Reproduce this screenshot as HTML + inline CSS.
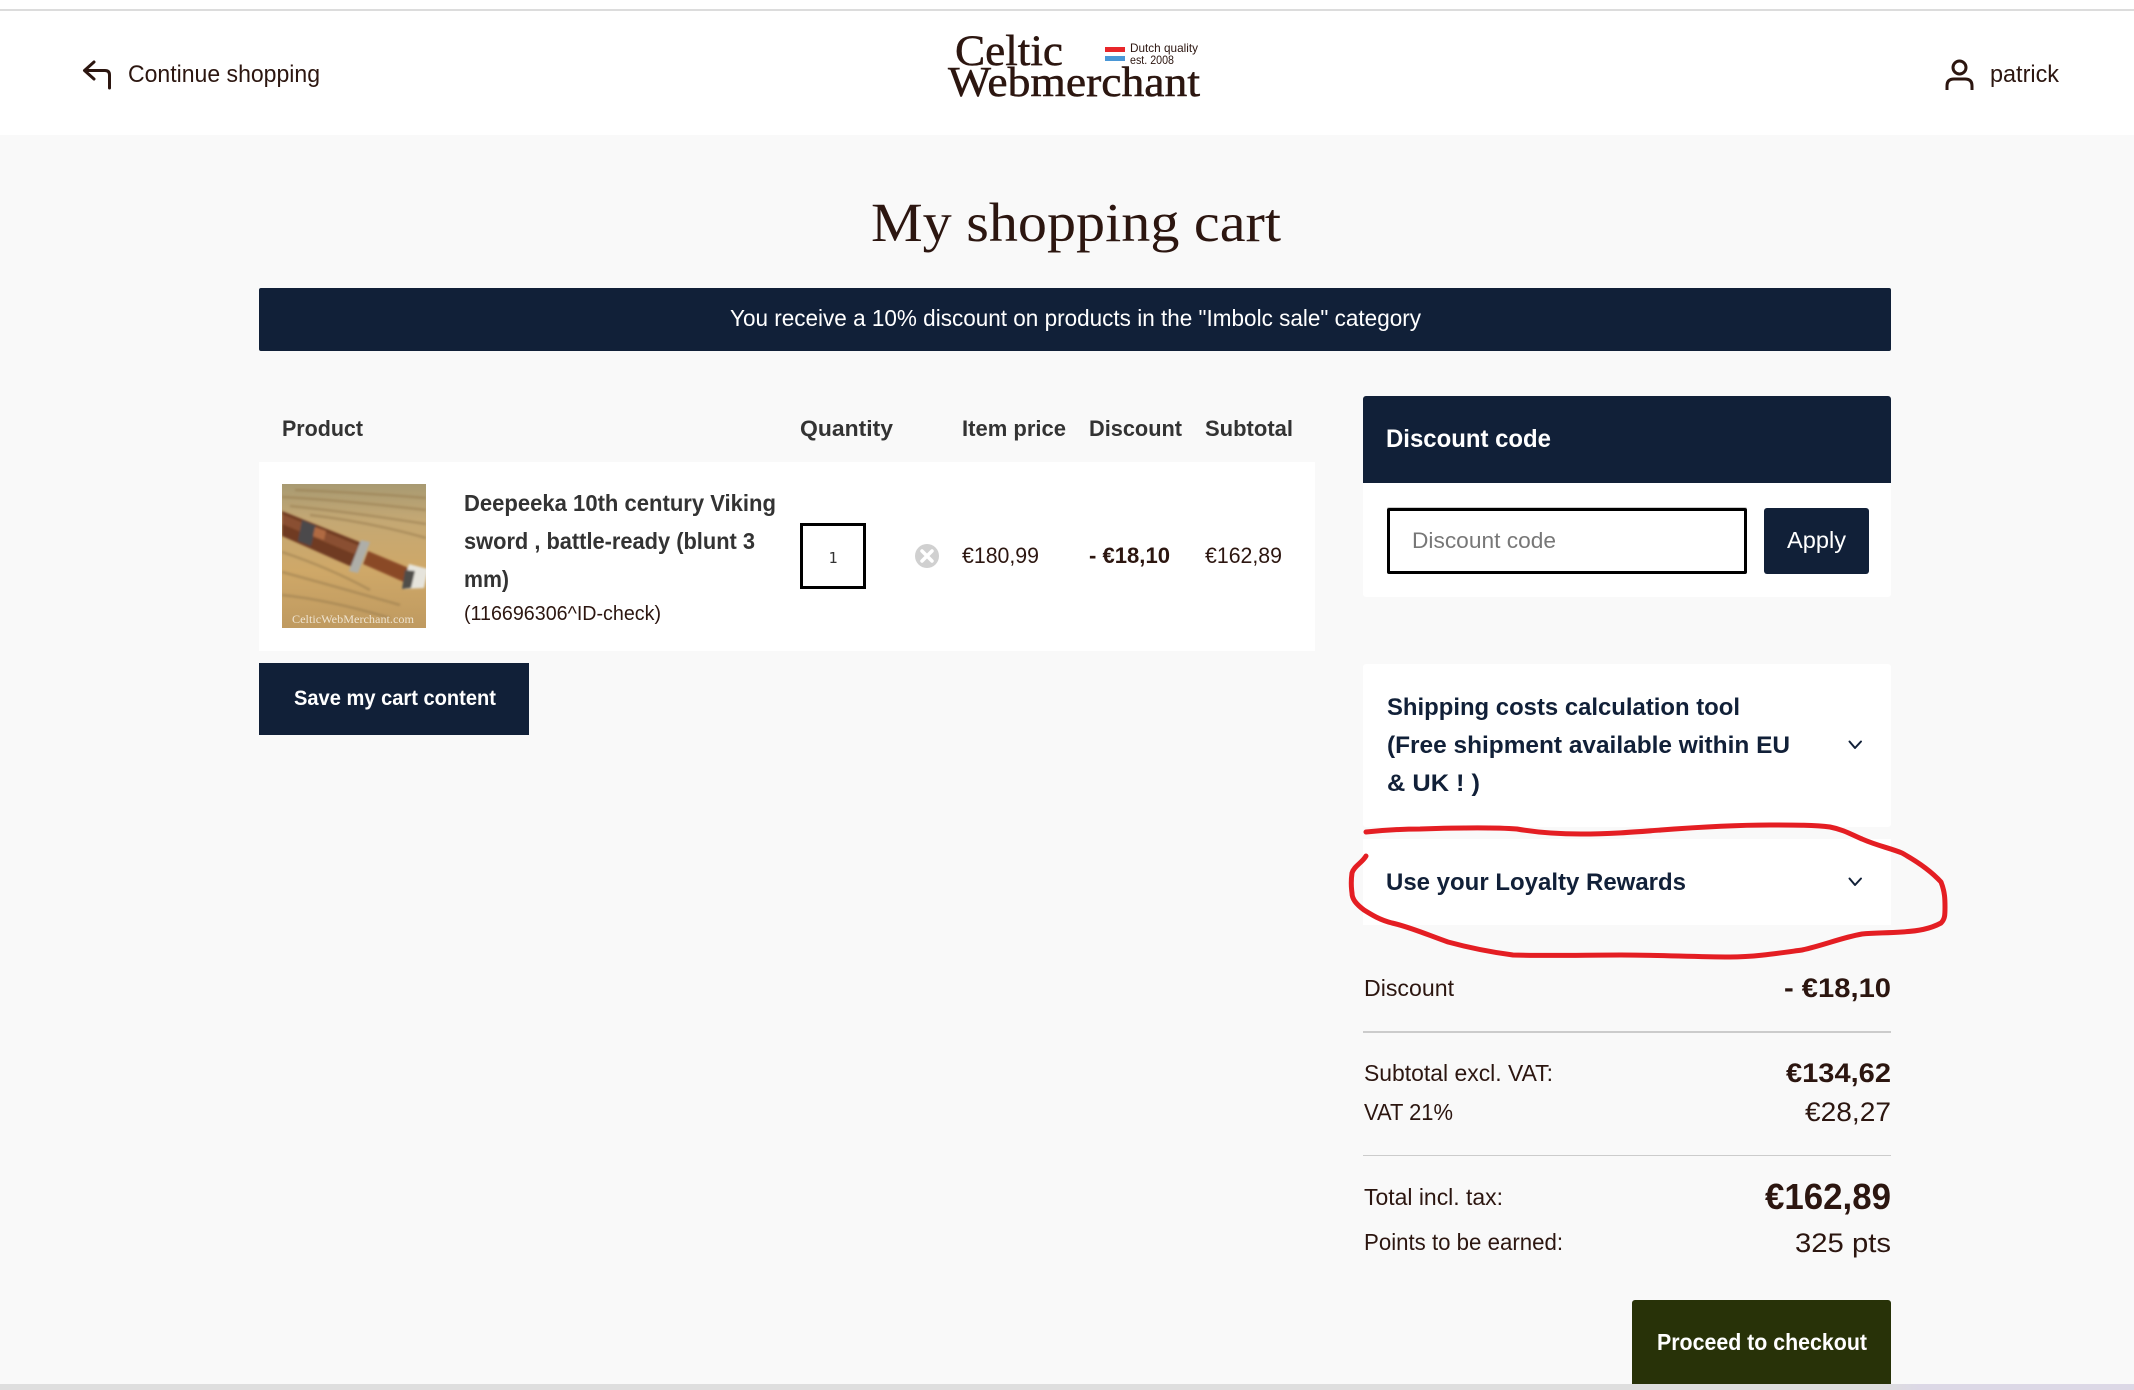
<!DOCTYPE html>
<html lang="en">
<head>
<meta charset="utf-8">
<title>My shopping cart</title>
<style>
html,body{margin:0;padding:0;width:2134px;height:1390px;overflow:hidden;background:#f9f9f9}
.b{position:absolute;box-sizing:border-box}
svg{position:absolute;left:0;top:0}
text{font-family:"Liberation Sans",sans-serif;fill:#2c1610}
.bd{font-weight:700}
.nv{fill:#112038}
.gr{fill:#333}
.w{fill:#fff}
.sf{font-family:"Liberation Serif",serif}
</style>
</head>
<body>
<div class="b" style="left:0;top:0;width:2134px;height:135px;background:#fff"></div>
<div class="b" style="left:0;top:9px;width:2134px;height:2px;background:#dcdcdc"></div>
<div class="b" style="left:259px;top:288px;width:1632px;height:63px;background:#112038;border-radius:2px"></div>
<div class="b" style="left:259px;top:462px;width:1056px;height:189px;background:#fff"></div>
<div class="b" style="left:800px;top:523px;width:66px;height:66px;border:3px solid #000;background:#fff"></div>
<div class="b" style="left:259px;top:663px;width:270px;height:72px;background:#112038"></div>
<div class="b" style="left:1363px;top:396px;width:528px;height:201px;background:#fff;border-radius:3px"></div>
<div class="b" style="left:1363px;top:396px;width:528px;height:87px;background:#112038;border-radius:3px 3px 0 0"></div>
<div class="b" style="left:1387px;top:508px;width:360px;height:66px;border:3px solid #000;border-radius:2px;background:#fff;box-shadow:0 -1px 0 #ccc"></div>
<div class="b" style="left:1764px;top:508px;width:105px;height:66px;background:#112038;border-radius:3px"></div>
<div class="b" style="left:1363px;top:664px;width:528px;height:163px;background:#fff;border-radius:3px"></div>
<div class="b" style="left:1363px;top:839px;width:528px;height:86px;background:#fff"></div>
<div class="b" style="left:1363px;top:1031px;width:528px;height:2px;background:#ccc"></div>
<div class="b" style="left:1363px;top:1155px;width:528px;height:1px;background:#ccc"></div>
<div class="b" style="left:1632px;top:1300px;width:259px;height:84px;background:#283208;border-radius:3px 3px 0 0"></div>
<div class="b" style="left:0;top:1384px;width:2134px;height:6px;background:linear-gradient(90deg,#dedede 0,#dedede 88%,#dcd8e6 90%,#dcd8e6 100%)"></div>

<svg width="2134" height="1390" viewBox="0 0 2134 1390" xmlns="http://www.w3.org/2000/svg">
<defs>
<linearGradient id="wood" x1="0" y1="0" x2="0" y2="1">
<stop offset="0" stop-color="#a89a72"/>
<stop offset=".25" stop-color="#c4a874"/>
<stop offset=".6" stop-color="#cfa868"/>
<stop offset="1" stop-color="#bf9a60"/>
</linearGradient>
<filter id="bl" x="-5%" y="-5%" width="110%" height="110%"><feGaussianBlur stdDeviation="1.100"/></filter>
<clipPath id="pc"><rect x="282" y="484" width="144" height="144"/></clipPath>
</defs>

<!-- header -->
<g fill="none" stroke="#2c1610" stroke-width="3" stroke-linecap="round" stroke-linejoin="round">
<path d="M94 62L84.500 70.500L94 79"/>
<path d="M85 70.500H105Q109.500 70.500 109.500 75V88"/>
</g>
<text x="128" y="82" font-size="24" textLength="192" lengthAdjust="spacingAndGlyphs">Continue shopping</text>

<text class="sf" x="955" y="65" font-size="43" stroke="#2c1610" stroke-width=".5" textLength="108" lengthAdjust="spacingAndGlyphs">Celtic</text>
<text class="sf" x="948" y="96" font-size="42" stroke="#2c1610" stroke-width=".5" textLength="252" lengthAdjust="spacingAndGlyphs">Webmerchant</text>
<rect x="1105" y="47" width="20" height="5" fill="#e8262a"/>
<rect x="1105" y="56" width="20" height="5" fill="#4a97d6"/>
<text x="1130" y="52" font-size="12" textLength="68" lengthAdjust="spacingAndGlyphs">Dutch quality</text>
<text x="1130" y="64" font-size="12" textLength="44" lengthAdjust="spacingAndGlyphs">est. 2008</text>

<g fill="none" stroke="#2c1610" stroke-width="3" stroke-linecap="butt">
<circle cx="1959.500" cy="67.500" r="6.500"/>
<path d="M1947 90V86Q1947 79 1954 79H1965Q1972 79 1972 86V90"/>
</g>
<text x="1990" y="82" font-size="24" textLength="69" lengthAdjust="spacingAndGlyphs">patrick</text>

<!-- title / banner -->
<text class="sf" x="871" y="241" font-size="55" textLength="410" lengthAdjust="spacingAndGlyphs">My shopping cart</text>
<text class="w" x="730" y="326" font-size="23" textLength="691" lengthAdjust="spacingAndGlyphs">You receive a 10% discount on products in the "Imbolc sale" category</text>

<!-- table head -->
<g font-size="22">
<text class="bd gr" x="282" y="436" textLength="81" lengthAdjust="spacingAndGlyphs">Product</text>
<text class="bd gr" x="800" y="436" textLength="93" lengthAdjust="spacingAndGlyphs">Quantity</text>
<text class="bd gr" x="962" y="436" textLength="104" lengthAdjust="spacingAndGlyphs">Item price</text>
<text class="bd gr" x="1089" y="436" textLength="93" lengthAdjust="spacingAndGlyphs">Discount</text>
<text class="bd gr" x="1205" y="436" textLength="88" lengthAdjust="spacingAndGlyphs">Subtotal</text>
</g>

<!-- product image -->
<g clip-path="url(#pc)">
<rect x="282" y="484" width="144" height="144" fill="url(#wood)"/>
<g filter="url(#bl)">
<g stroke="#94784a" stroke-width="2.500" opacity=".5" fill="none">
<path d="M282 497Q340 500 426 510"/>
<path d="M290 506Q350 512 426 524"/>
<path d="M310 515Q370 522 426 538"/>
<path d="M295 490Q350 492 426 498"/>
<path d="M282 552Q330 568 370 590"/>
<path d="M282 572Q330 585 400 605"/>
<path d="M282 595Q330 600 390 618"/>
</g>
<path d="M282 511L362 543L352 567L282 536Z" fill="#6f3a20"/>
<path d="M282 514L360 546L354 554L282 524Z" fill="#8a5030"/>
<path d="M302 520L316 526L311 546L298 541Z" fill="#4c4a4c"/>
<path d="M315 527L326 531L324 540L313 536Z" fill="#b06a42"/>
<path d="M368 551L411 569L404 582L363 564Z" fill="#8a4826"/>
<path d="M361 540L370 542L358 573L349 571Z" fill="#aeaea8"/>
<path d="M409 564L428 569L424 588L402 589Z" fill="#e6e4dc"/>
<path d="M405 570L402 589L411 588L415 571Z" fill="#4f4d48"/>
</g>
<text x="292" y="623" font-size="12" class="sf" style="fill:#eee3cf" textLength="122" lengthAdjust="spacingAndGlyphs">CelticWebMerchant.com</text>
</g>

<!-- product -->
<g font-size="23">
<text class="bd gr" x="464" y="511" textLength="312" lengthAdjust="spacingAndGlyphs">Deepeeka 10th century Viking</text>
<text class="bd gr" x="464" y="549" textLength="291" lengthAdjust="spacingAndGlyphs">sword , battle-ready (blunt 3</text>
<text class="bd gr" x="464" y="587" textLength="45" lengthAdjust="spacingAndGlyphs">mm)</text>
</g>
<text x="464" y="620" font-size="20" textLength="197" lengthAdjust="spacingAndGlyphs">(116696306^ID-check)</text>
<text x="833" y="563" font-size="15" text-anchor="middle" style="font-family:'DejaVu Sans Mono',monospace;fill:#333">1</text>
<circle cx="927" cy="556" r="12" fill="#d0d0d0"/>
<path d="M922 551L932 561M932 551L922 561" stroke="#fff" stroke-width="3.500" stroke-linecap="round"/>
<text x="962" y="563" font-size="22" textLength="77" lengthAdjust="spacingAndGlyphs">€180,99</text>
<text class="bd" x="1089" y="563" font-size="22" textLength="81" lengthAdjust="spacingAndGlyphs">- €18,10</text>
<text x="1205" y="563" font-size="22" textLength="77" lengthAdjust="spacingAndGlyphs">€162,89</text>

<text class="bd w" x="294" y="705" font-size="21" textLength="202" lengthAdjust="spacingAndGlyphs">Save my cart content</text>

<!-- discount card -->
<text class="bd w" x="1386" y="447" font-size="25" textLength="165" lengthAdjust="spacingAndGlyphs">Discount code</text>
<text x="1412" y="548" font-size="22" style="fill:#777" textLength="144" lengthAdjust="spacingAndGlyphs">Discount code</text>
<text class="w" x="1787" y="548" font-size="23" textLength="59" lengthAdjust="spacingAndGlyphs">Apply</text>

<!-- accordions -->
<g font-size="24">
<text class="bd nv" x="1387" y="715" textLength="353" lengthAdjust="spacingAndGlyphs">Shipping costs calculation tool</text>
<text class="bd nv" x="1387" y="753" textLength="403" lengthAdjust="spacingAndGlyphs">(Free shipment available within EU</text>
<text class="bd nv" x="1387" y="791" textLength="93" lengthAdjust="spacingAndGlyphs">&amp; UK ! )</text>
<text class="bd nv" x="1386" y="890" textLength="300" lengthAdjust="spacingAndGlyphs">Use your Loyalty Rewards</text>
</g>
<g fill="none" stroke="#112038" stroke-width="2" stroke-linecap="round" stroke-linejoin="round">
<path d="M1849.500 741.500L1855 748L1861 741.500"/>
<path d="M1849.500 878.500L1855 885L1861 878.500"/>
</g>

<!-- totals -->
<text x="1364" y="996" font-size="23" textLength="90" lengthAdjust="spacingAndGlyphs">Discount</text>
<text class="bd" x="1891" y="997" font-size="27" text-anchor="end" textLength="107" lengthAdjust="spacingAndGlyphs">- €18,10</text>
<text x="1364" y="1081" font-size="23" textLength="189" lengthAdjust="spacingAndGlyphs">Subtotal excl. VAT:</text>
<text class="bd" x="1891" y="1082" font-size="27" text-anchor="end" textLength="105" lengthAdjust="spacingAndGlyphs">€134,62</text>
<text x="1364" y="1120" font-size="23" textLength="89" lengthAdjust="spacingAndGlyphs">VAT 21%</text>
<text x="1891" y="1121" font-size="27" text-anchor="end" textLength="86" lengthAdjust="spacingAndGlyphs">€28,27</text>
<text x="1364" y="1205" font-size="23" textLength="139" lengthAdjust="spacingAndGlyphs">Total incl. tax:</text>
<text class="bd" x="1891" y="1209" font-size="36" text-anchor="end" textLength="126" lengthAdjust="spacingAndGlyphs">€162,89</text>
<text x="1364" y="1250" font-size="23" textLength="199" lengthAdjust="spacingAndGlyphs">Points to be earned:</text>
<text x="1891" y="1252" font-size="27" text-anchor="end" textLength="96" lengthAdjust="spacingAndGlyphs">325 pts</text>
<text class="bd w" x="1657" y="1350" font-size="23" textLength="210" lengthAdjust="spacingAndGlyphs">Proceed to checkout</text>

<!-- red annotation -->
<path d="M1366 832C1385 830 1400 829 1420 829C1450 828 1490 827 1517 829C1540 833 1560 834 1581 834C1610 834 1635 832 1661 830C1700 827 1735 825 1770 825C1795 825 1815 825 1830 827C1845 830 1852 835 1862 839C1878 846 1890 848 1902 853C1920 863 1932 872 1941 882C1945 892 1945 900 1945 907C1945 915 1945 919 1941 923C1930 929 1918 931 1902 932C1885 933 1875 933 1862 934C1840 938 1825 945 1802 950C1780 953 1755 957 1730 957C1695 957 1660 955 1621 955C1585 955 1550 956 1513 955C1490 952 1470 948 1448 942C1428 935 1410 927 1392 923C1380 920 1372 915 1364 910C1356 904 1352 899 1352 893C1351 886 1351 880 1352 873C1354 866 1362 863 1366 856" fill="none" stroke="#e41e23" stroke-width="5" stroke-linecap="round" stroke-linejoin="round"/>
</svg>
</body>
</html>
